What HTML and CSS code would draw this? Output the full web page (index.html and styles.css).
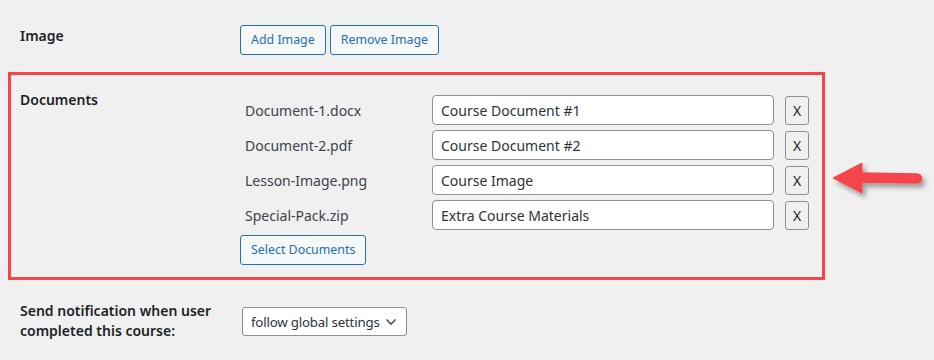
FILE: index.html
```html
<!DOCTYPE html>
<html lang="en">
<head>
<meta charset="utf-8">
<title>Course settings</title>
<link rel="stylesheet" href="styles.css">
</head>
<body>
<div class="page">
  <div class="row row-image">
    <div class="label">Image</div>
    <div class="field buttons">
      <button class="btn" type="button">Add Image</button>
      <button class="btn" type="button">Remove Image</button>
    </div>
  </div>

  <div class="row row-docs">
    <div class="label">Documents</div>
    <div class="field docs">
      <div class="doc">
        <span class="doc-name">Document-1.docx</span>
        <input class="doc-title" type="text" value="Course Document #1">
        <button class="btn-x" type="button">X</button>
      </div>
      <div class="doc">
        <span class="doc-name">Document-2.pdf</span>
        <input class="doc-title" type="text" value="Course Document #2">
        <button class="btn-x" type="button">X</button>
      </div>
      <div class="doc">
        <span class="doc-name">Lesson-Image.png</span>
        <input class="doc-title" type="text" value="Course Image">
        <button class="btn-x" type="button">X</button>
      </div>
      <div class="doc">
        <span class="doc-name">Special-Pack.zip</span>
        <input class="doc-title" type="text" value="Extra Course Materials">
        <button class="btn-x" type="button">X</button>
      </div>
      <button class="btn btn-select" type="button">Select Documents</button>
    </div>
  </div>

  <div class="row row-notify">
    <div class="label">Send notification when user completed this course:</div>
    <div class="field">
      <div class="select">
        <span class="select-text">follow global settings</span>
        <svg class="chev" width="12" height="8" viewBox="0 0 12 8"><path d="M1.5 1.5 L6 6 L10.5 1.5" fill="none" stroke="#50575e" stroke-width="1.6"/></svg>
      </div>
    </div>
  </div>

  <svg class="arrow" width="108" height="56" viewBox="826 150 108 56">
    <defs>
      <filter id="shadow" x="-20%" y="-40%" width="140%" height="180%">
        <feDropShadow dx="3" dy="4" stdDeviation="2.5" flood-color="#000" flood-opacity="0.35"/>
      </filter>
    </defs>
    <g filter="url(#shadow)" fill="#f5454b" stroke="#f5454b">
      <polygon points="833,178 862,163 862,193" stroke-width="1" stroke-linejoin="round"/>
      <line x1="858" y1="177.5" x2="917" y2="178.5" stroke-width="10.5" stroke-linecap="round"/>
    </g>
  </svg>
</div>
</body>
</html>
```

FILE: styles.css
```css
body {
  margin: 0;
  background: #f0f0f1;
  font-family: "Noto Sans", "Open Sans", sans-serif;
  font-size: 14px;
  color: #3c434a;
}

.page {
  position: relative;
  height: 360px;
}

.row {
  display: grid;
  grid-template-columns: 220px 1fr;
  align-items: start;
}

.label {
  font-weight: 600;
  color: #1d2327;
  font-size: 14px;
  line-height: 20px;
  padding-top: 1px;
  padding-right: 20px;
}

.row-image {
  padding: 25px 0 0 20px;
  margin-bottom: 17px;
}

.buttons {
  display: flex;
  gap: 4px;
}

.btn {
  height: 30px;
  padding: 0 10px;
  border: 1px solid #2271b1;
  border-radius: 3px;
  background: #f6f7f7;
  color: #2271b1;
  font-family: inherit;
  font-size: 12.4px;
  line-height: 28px;
  white-space: nowrap;
  cursor: pointer;
}

.row-docs {
  margin-left: 8px;
  width: 817px;
  box-sizing: border-box;
  border: 3px solid #f5454b;
  padding: 14px 0 12px 9px;
}

.row-docs .field {
  padding-top: 6px;
}

.docs {
  display: flex;
  flex-direction: column;
  align-items: flex-start;
  gap: 5px;
}

.doc {
  display: flex;
  align-items: center;
  height: 30px;
}

.doc-name {
  width: 187px;
  padding-left: 5px;
  color: #3c434a;
}

.doc-title {
  width: 342px;
  height: 30px;
  box-sizing: border-box;
  border: 1px solid #8c8f94;
  border-radius: 4px;
  padding: 0 8px;
  background: #fff;
  color: #2c3338;
  font-family: inherit;
  font-size: 14px;
}

.btn-x {
  margin-left: 11px;
  width: 24px;
  height: 29px;
  padding: 0;
  border: 1px solid #8c8f94;
  border-radius: 3px;
  background: #f0f0f1;
  color: #1d2327;
  font-family: inherit;
  font-size: 14px;
}

.row-notify {
  padding-left: 20px;
  margin-top: 20px;
}

.select {
  margin-top: 7px;
  margin-left: 2px;
  width: 165px;
  height: 29px;
  box-sizing: border-box;
  border: 1px solid #8c8f94;
  border-radius: 3px;
  background: #fff;
  display: flex;
  align-items: center;
  gap: 5px;
  padding: 0 0 0 8px;
  color: #2c3338;
}

.select-text {
  white-space: nowrap;
  font-size: 13.3px;
  letter-spacing: -0.2px;
}

.chev {
  display: block;
  flex: none;
}

.arrow {
  position: absolute;
  left: 826px;
  top: 150px;
}
```
